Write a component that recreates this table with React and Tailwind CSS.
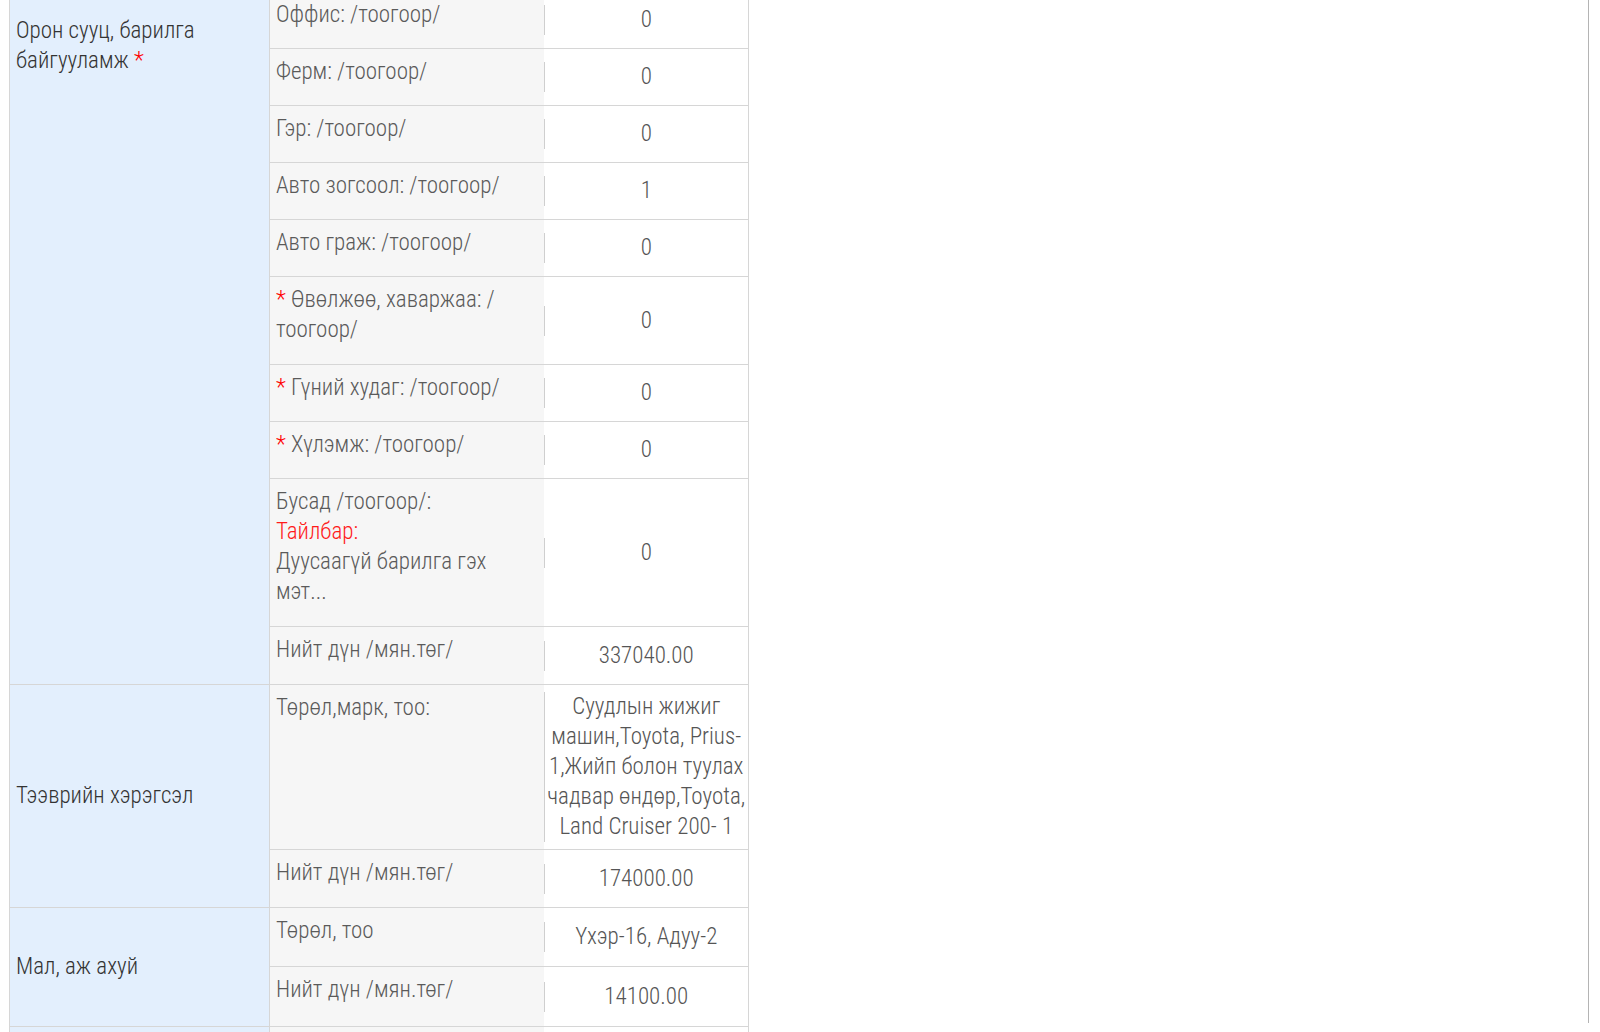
import React from "react";

const font = { fontFamily: "'Roboto Condensed', 'Liberation Sans Narrow', Roboto, sans-serif" };

const Star = () => <span className="text-[#ff0000]">*</span>;

const Label = ({ children, className = "pb-[18px]" }) => (
  <td className={"bg-[#f6f6f6] align-top pl-[6px] pr-2 pt-2 text-[#5a5a5a] border-t border-[#d6d6d6] " + className}>
    {children}
  </td>
);

const Value = ({ children }) => (
  <td className="bg-white align-middle p-0 py-[7px] border-t border-r border-[#d6d6d6]">
    <div className="border-l border-[#cfcfcf] text-center text-[#555] whitespace-nowrap">{children}</div>
  </td>
);

const Section = ({ children, rows, top }) => (
  <td
    rowSpan={rows}
    className={
      "bg-[#e3effd] border border-[#d6d6d6] pl-[6px] pr-2 text-[#333] " +
      (top ? "align-top pt-[24px]" : "align-middle")
    }
  >
    {children}
  </td>
);

export default () => {
  const buildings = [
    ["Оффис: /тоогоор/", "0"],
    ["Ферм: /тоогоор/", "0"],
    ["Гэр: /тоогоор/", "0"],
    ["Авто зогсоол: /тоогоор/", "1"],
    ["Авто граж: /тоогоор/", "0"],
  ];

  return (
    <div className="w-[1600px] h-[1032px] overflow-hidden bg-white" style={font}>
      <div className="w-[1589px] h-full border-r border-[#b4b4b4] pl-[9px]">
        <table className="-mt-[9px] w-[739px] border-collapse text-[23px] font-light leading-[30px] table-fixed">
          <colgroup>
            <col className="w-[260px]" />
            <col className="w-[274px]" />
            <col className="w-[205px]" />
          </colgroup>
          <tbody>
            <tr>
              <Section rows={10} top>
                Орон сууц, барилга
                <br />
                байгууламж <Star />
              </Section>
              <Label>{buildings[0][0]}</Label>
              <Value>{buildings[0][1]}</Value>
            </tr>
            {buildings.slice(1).map(([label, value]) => (
              <tr key={label}>
                <Label>{label}</Label>
                <Value>{value}</Value>
              </tr>
            ))}
            <tr>
              <Label className="pb-[19px]">
                <Star /> Өвөлжөө, хаваржаа: /
                <br />
                тоогоор/
              </Label>
              <Value>0</Value>
            </tr>
            <tr>
              <Label>
                <Star /> Гүний худаг: /тоогоор/
              </Label>
              <Value>0</Value>
            </tr>
            <tr>
              <Label>
                <Star /> Хүлэмж: /тоогоор/
              </Label>
              <Value>0</Value>
            </tr>
            <tr>
              <Label className="pb-[19px]">
                Бусад /тоогоор/:
                <br />
                <span className="text-[#ff1a1a]">Тайлбар:</span>
                <br />
                Дуусаагүй барилга гэх
                <br />
                мэт...
              </Label>
              <Value>0</Value>
            </tr>
            <tr>
              <Label className="pb-[19px]">Нийт дүн /мян.төг/</Label>
              <Value>337040.00</Value>
            </tr>

            <tr>
              <Section rows={2}>Тээврийн хэрэгсэл</Section>
              <Label>Төрөл,марк, тоо:</Label>
              <Value>
                Суудлын жижиг
                <br />
                машин,Toyota, Prius-
                <br />
                1,Жийп болон туулах
                <br />
                чадвар өндөр,Toyota,
                <br />
                Land Cruiser 200- 1
              </Value>
            </tr>
            <tr>
              <Label className="pb-[19px]">Нийт дүн /мян.төг/</Label>
              <Value>174000.00</Value>
            </tr>

            <tr>
              <Section rows={2}>Мал, аж ахуй</Section>
              <Label className="pb-[20px]">Төрөл, тоо</Label>
              <Value>Үхэр-16, Адуу-2</Value>
            </tr>
            <tr>
              <Label className="pb-[21px]">Нийт дүн /мян.төг/</Label>
              <Value>14100.00</Value>
            </tr>

            <tr>
              <Section rows={2}>Үнэт эдлэл</Section>
              <Label>Төрөл, тоо</Label>
              <Value>0</Value>
            </tr>
            <tr>
              <Label>Нийт дүн /мян.төг/</Label>
              <Value>0.00</Value>
            </tr>
          </tbody>
        </table>
      </div>
    </div>
  );
};
